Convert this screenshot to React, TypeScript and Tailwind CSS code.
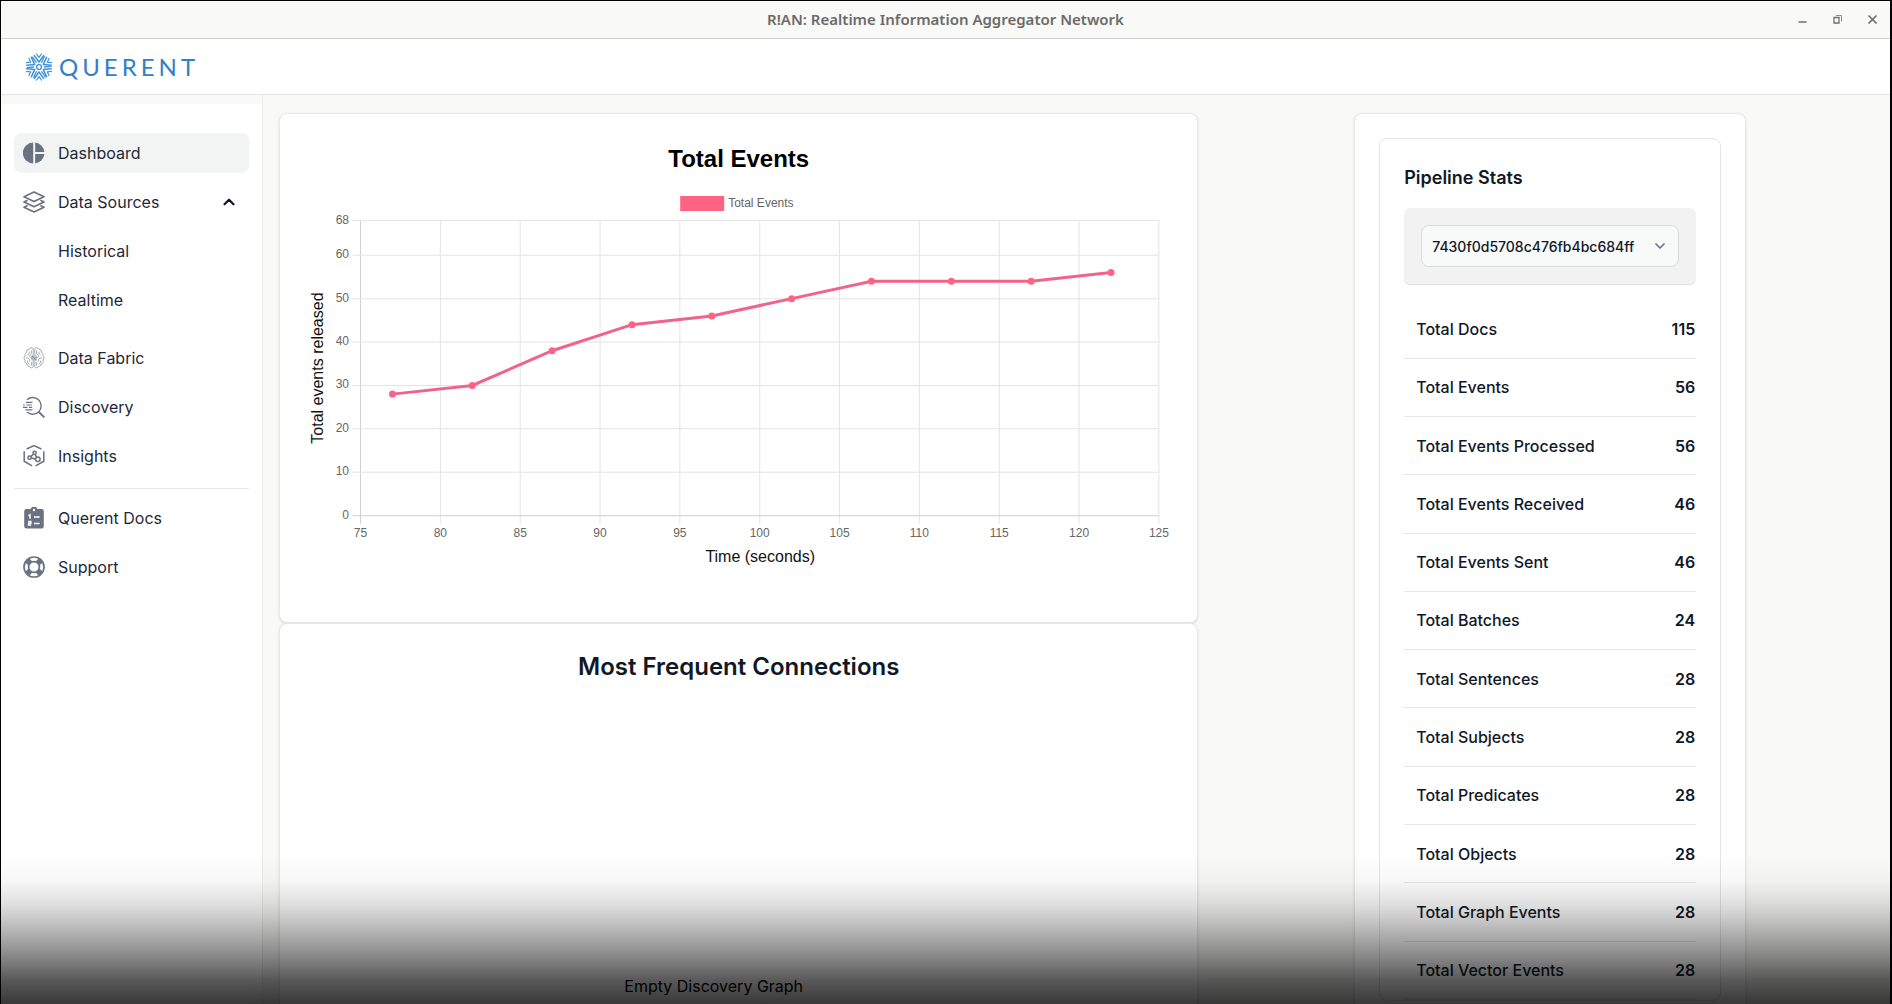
import React from "react";
import { ChevronDown, ChevronUp } from "lucide-react";

const ICON = "size-[22px] shrink-0 text-gray-500";

function PieIcon() {
  return (
    <svg viewBox="0 0 22 22" className={ICON} fill="currentColor" aria-hidden="true">
      <path d="M10.2 0.6a10.4 10.4 0 0 0 0 20.8z" />
      <path d="M12.2 0.6a10.4 10.4 0 0 1 9.2 9.4h-9.2z" />
      <path d="M12.2 12h9.2a10.4 10.4 0 0 1-9.2 9.4z" />
    </svg>
  );
}

function LayersIcon() {
  return (
    <svg viewBox="0 0 22 22" className={ICON} fill="none" stroke="currentColor" strokeWidth="1.7" strokeLinejoin="round" aria-hidden="true">
      <path d="M11 1 L21 5.8 L11 10.6 L1 5.8 Z" />
      <path d="M4.6 9.2 L1 11 L11 15.8 L21 11 L17.4 9.2" />
      <path d="M4.6 14.4 L1 16.2 L11 21 L21 16.2 L17.4 14.4" />
    </svg>
  );
}

function BrainHalf() {
  return (
    <g>
      <path d="M10.2 1.6c-.8-1.4-3.600-1.200-4 .6-1.800-.2-3 1.400-2.400 3-1.600.6-2.400 2.200-1.600 3.600-1.400 1-1.600 3.200-.2 4.400-.6 1.600.2 3.200 1.800 3.600 0 1.800 1.200 2.800 2.600 2.600.6 1.800 3.200 2 3.800.4z" />
      <path d="M8.400 3.400v3L6.800 7.800v2.400M6 4.600v1.800L4.200 8.400M2.800 11h2.400l1.400 1.600v2M8.600 15v3.600M4.600 13.600v2.200l1.600 1.400M7.200 10.600h1.600" />
    </g>
  );
}

function BrainIcon() {
  return (
    <svg viewBox="0 0 22 22" className={ICON} fill="none" stroke="currentColor" strokeWidth="0.6" aria-hidden="true">
      <BrainHalf />
      <g transform="translate(22 0) scale(-1 1)">
        <BrainHalf />
      </g>
      <path d="M9 13.400V8.600l4 4.800V8.600" strokeWidth="0.8" />
    </svg>
  );
}

function DiscoveryIcon() {
  return (
    <svg viewBox="0 0 22 22" className={ICON} fill="none" stroke="currentColor" strokeWidth="1.4" aria-hidden="true">
      <path d="M4 3.800a8.400 8.400 0 1 1 0 12.200" />
      <path d="M15.600 15.800l5.800 5.600" strokeWidth="1.9" />
      <path d="M3 6.400h6.400M0 9h1.800M3.400 9h5.400M0 11.400h4.400M5.800 11.400h3.400M2.400 13.800h7" strokeWidth="1.2" />
    </svg>
  );
}

function InsightsIcon() {
  return (
    <svg viewBox="0 0 22 22" className={ICON} fill="none" stroke="currentColor" strokeWidth="1.500" aria-hidden="true">
      <path d="M3.600 4l7.400-3.400 7.400 3.400M1.200 6.200v10l7.800 4.600M20.800 6.200v10l-8.200 4.600" />
      <circle cx="11.600" cy="7.800" r="1.600" />
      <circle cx="6.600" cy="12.800" r="1.700" />
      <circle cx="14.800" cy="14.200" r="2.300" />
      <path d="M10.400 9.200l-2.600 2.400M12.200 9.400l1.400 2.800M8.300 13l4.200 1" />
    </svg>
  );
}

function DocsIcon() {
  return (
    <svg viewBox="0 0 22 22" className={ICON} aria-hidden="true">
      <path d="M3.4 2h4.400a3.300 3.300 0 0 1 6.400 0h4.400A2.200 2.200 0 0 1 20.800 4.200v15a2.200 2.200 0 0 1-2.200 2.200H3.400a2.200 2.200 0 0 1-2.200-2.200v-15A2.200 2.200 0 0 1 3.400 2z" fill="currentColor" />
      <circle cx="11" cy="3" r="1.200" fill="#fff" />
      <path d="M5.400 8.600l1.600-.8v4M11 10h5.600M11 16.400h5.600M5.200 14.600h2.600v1.600H5.600v1.800h2.600" fill="none" stroke="#fff" strokeWidth="1.500" />
    </svg>
  );
}

function SupportIcon() {
  return (
    <svg viewBox="0 0 22 22" className={ICON} fill="none" stroke="currentColor" aria-hidden="true">
      <circle cx="11" cy="11" r="10" strokeWidth="1.700" />
      <circle cx="11" cy="11" r="5.400" strokeWidth="1.700" />
      <path d="M4.200 4.200L7.200 7.200M17.800 4.200L14.800 7.200M4.200 17.800L7.200 14.800M17.800 17.800L14.800 14.800" strokeWidth="5.600" />
    </svg>
  );
}

const ARMS = [0, 60, 120, 180, 240, 300];

function LogoMark() {
  return (
    <svg viewBox="-14 -14 28 28" className="size-7 shrink-0 text-[#3f93dc]" fill="none" stroke="currentColor" strokeWidth="1.200" strokeLinecap="round" strokeLinejoin="round" aria-hidden="true">
      <circle r="2.400" strokeWidth="1.400" />
      {ARMS.map((a) => (
        <g key={a} transform={`rotate(${a})`}>
          <path d="M-4.600 -11.400L0 -5L4.600 -11.400" strokeWidth="1.600" />
          <path d="M-2.400 -13L0 -9.600L2.400 -13" />
          <path d="M-2.700 -4.700L-6.400 -9.800" strokeWidth="1.300" />
        </g>
      ))}
    </svg>
  );
}

function TitleBar() {
  return (
    <header className="grid h-[39px] shrink-0 grid-cols-[1fr_auto_1fr] items-center border-t border-b border-t-black border-b-[#cfcfcd] bg-[#f9f9f8]">
      <span />
      <h1 className="font-['Noto_Sans',sans-serif] text-[15px] font-semibold text-[#6b6b69]">R!AN: Realtime Information Aggregator Network</h1>
      <div className="flex items-center justify-end gap-4 pr-2 text-[#6f6f6d]">
        <button aria-label="Minimize" className="flex size-[19px] items-center justify-center">
          <svg viewBox="0 0 19 19" className="size-[19px]" stroke="currentColor" strokeWidth="1.500"><path d="M5.500 12h8" /></svg>
        </button>
        <button aria-label="Restore" className="flex size-[19px] items-center justify-center">
          <svg viewBox="0 0 19 19" className="size-[19px]" fill="none" stroke="currentColor"><path d="M6 7.500h5v5.500h-5z" strokeWidth="1.300" /><path d="M8 5.500h5.500v6" strokeWidth="0.800" /></svg>
        </button>
        <button aria-label="Close" className="flex size-[19px] items-center justify-center">
          <svg viewBox="0 0 19 19" className="size-[19px]" stroke="currentColor" strokeWidth="1.700"><path d="M5.500 5.500l8 8M13.500 5.500l-8 8" /></svg>
        </button>
      </div>
    </header>
  );
}

type NavProps = { icon?: React.ReactNode; label: string; active?: boolean };

function NavItem({ icon, label, active }: NavProps) {
  return (
    <li>
      <a href="#" className={active ? "flex h-10 items-center gap-[13px] rounded-lg bg-[#f2f3f3] px-[9px]" : "flex h-10 items-center gap-[13px] rounded-lg px-[9px]"}>
        {icon ?? <span className="w-[22px]" />}
        {label}
      </a>
    </li>
  );
}

function Sidebar() {
  return (
    <div className="w-[262px] shrink-0 border-r border-[#ebebeb] pt-[9px]">
      <nav className="flex h-full flex-col bg-white px-[13px] pt-[29px] text-[16px] text-gray-800">
        <ul className="flex flex-col gap-[9px]">
          <NavItem icon={<PieIcon />} label="Dashboard" active />
          <li>
            <button className="flex h-10 w-full items-center gap-[13px] px-[9px] text-left">
              <LayersIcon />
              <span className="flex-1">Data Sources</span>
              <ChevronUp className="mr-0.5 size-[18px] text-gray-900" strokeWidth={3} />
            </button>
            <ul className="mt-[9px] flex flex-col gap-[9px] pb-[9px]">
              <NavItem label="Historical" />
              <NavItem label="Realtime" />
            </ul>
          </li>
          <NavItem icon={<BrainIcon />} label="Data Fabric" />
          <NavItem icon={<DiscoveryIcon />} label="Discovery" />
          <NavItem icon={<InsightsIcon />} label="Insights" />
        </ul>
        <ul className="mt-3 flex flex-col gap-[9px] border-t border-gray-200 pt-[9px]">
          <NavItem icon={<DocsIcon />} label="Querent Docs" />
          <NavItem icon={<SupportIcon />} label="Support" />
        </ul>
      </nav>
    </div>
  );
}

const POINTS: [number, number][] = [
  [77, 28], [82, 30], [87, 38], [92, 44], [97, 46],
  [102, 50], [107, 54], [112, 54], [117, 54], [122, 56],
];
const X_TICKS = [75, 80, 85, 90, 95, 100, 105, 110, 115, 120, 125];
const Y_TICKS = [0, 10, 20, 30, 40, 50, 60, 68];
const px = (v: number) => 80.5 + ((v - 75) * 798) / 50;
const py = (v: number) => 324.5 - (v * 295) / 68;

function EventsChart() {
  return (
    <svg viewBox="0 0 917 382" className="h-auto w-full font-['Liberation_Sans',sans-serif]" role="img" aria-label="Total events released over time">
      <rect x="400" y="5" width="44" height="15" fill="#ff6384" />
      <text x="448" y="16" fontSize="12" fill="#666">Total Events</text>
      {X_TICKS.map((t) => (
        <g key={t}>
          <line x1={px(t)} x2={px(t)} y1={py(68)} y2={py(0) + 8} stroke={t === 75 ? "#cfcfcf" : "#e4e4e4"} />
          <text x={px(t)} y="346" fontSize="12" fill="#666" textAnchor="middle">{t}</text>
        </g>
      ))}
      {Y_TICKS.map((t) => (
        <g key={t}>
          <line x1={px(75) - 8} x2={px(125)} y1={py(t)} y2={py(t)} stroke={t === 0 ? "#cfcfcf" : "#e4e4e4"} />
          <text x="69" y={py(t) + 3} fontSize="12" fill="#666" textAnchor="end">{t}</text>
        </g>
      ))}
      <polyline points={POINTS.map(([x, y]) => `${px(x)},${py(y)}`).join(" ")} fill="none" stroke="#f0648a" strokeWidth="3" />
      {POINTS.map(([x, y]) => (
        <circle key={x} cx={px(x)} cy={py(y)} r="3.500" fill="#ff6384" />
      ))}
      <text x="480" y="371" fontSize="16" fill="#111" textAnchor="middle">Time (seconds)</text>
      <text transform="translate(43 177) rotate(-90)" fontSize="16" fill="#111" textAnchor="middle">Total events released</text>
    </svg>
  );
}

const STATS: [string, number][] = [
  ["Total Docs", 115],
  ["Total Events", 56],
  ["Total Events Processed", 56],
  ["Total Events Received", 46],
  ["Total Events Sent", 46],
  ["Total Batches", 24],
  ["Total Sentences", 28],
  ["Total Subjects", 28],
  ["Total Predicates", 28],
  ["Total Objects", 28],
  ["Total Graph Events", 28],
  ["Total Vector Events", 28],
];

function PipelineStats() {
  return (
    <section className="w-[392px] self-start rounded-lg border border-[#e8e8e8] bg-white p-6 shadow-sm">
      <div className="rounded-lg border border-[#e3e5e7] px-6 pt-[25px]">
        <h2 className="text-[18px] leading-7 font-semibold text-gray-900">Pipeline Stats</h2>
        <div className="mt-4 rounded-md border-b border-[#e0e0e0] bg-[#f2f2f2] px-[17px] py-[17px]">
          <div className="relative">
            <select aria-label="Pipeline" className="h-[42px] w-full appearance-none rounded-lg border border-[#d9dcdf] bg-[#f8f9f9] pr-9 pl-[10px] text-[14px] font-medium text-gray-900">
              <option>7430f0d5708c476fb4bc684ff</option>
            </select>
            <ChevronDown className="pointer-events-none absolute top-[13px] right-[11px] size-4 text-gray-500" strokeWidth={2.5} />
          </div>
        </div>
        <table className="mt-4 h-[699px] w-full text-[16px] text-gray-900">
          <tbody>
            {STATS.map(([label, value]) => (
              <tr key={label} className="border-b border-gray-200">
                <th scope="row" className="pl-3 text-left font-medium">{label}</th>
                <td className="pr-px text-right font-semibold">{value}</td>
              </tr>
            ))}
          </tbody>
        </table>
      </div>
    </section>
  );
}

export default function App() {
  return (
    <div className="relative flex h-screen flex-col overflow-hidden border-r-2 border-l border-black bg-[#f9f9f8] font-['Inter',sans-serif]">
      <TitleBar />
      <div className="flex h-14 shrink-0 items-center border-b border-[#e6e6e6] bg-white px-6">
        <a href="#" className="flex items-center gap-1.5 text-[#2f80c9]">
          <LogoMark />
          <span className="font-['Lato',sans-serif] text-[24px] leading-7 tracking-[4px]">QUERENT</span>
        </a>
      </div>
      <div className="flex min-h-0 flex-1">
        <Sidebar />
        <main className="grid min-w-0 flex-1 grid-cols-[23fr_17fr] gap-x-3 overflow-hidden pt-[18px] pl-4">
          <div>
            <section className="rounded-lg border border-[#e8e8e8] bg-white pt-[29px] pb-[49px] shadow-sm">
              <h2 className="pb-4 text-center font-['Liberation_Sans',sans-serif] text-[24px] leading-8 font-bold text-black">Total Events</h2>
              <EventsChart />
            </section>
            <section className="rounded-lg border border-[#e8e8e8] bg-white pt-[27px] pb-12 text-center shadow-sm">
              <h2 className="text-[24px] leading-8 font-semibold text-gray-900">Most Frequent Connections</h2>
              <p className="pt-[291px] pr-[50px] text-[16px] leading-6 text-black">Empty Discovery Graph</p>
            </section>
          </div>
          <div className="flex justify-center">
            <PipelineStats />
          </div>
        </main>
      </div>
      <div className="pointer-events-none absolute inset-x-0 bottom-0 h-[150px] bg-[linear-gradient(to_bottom,rgba(0,0,0,0)_0%,rgba(0,0,0,0.03)_18%,rgba(0,0,0,0.12)_33%,rgba(0,0,0,0.2)_42%,rgba(0,0,0,0.4)_62%,rgba(0,0,0,0.52)_73%,rgba(0,0,0,0.65)_84%,rgba(0,0,0,0.78)_100%)]" />
    </div>
  );
}
